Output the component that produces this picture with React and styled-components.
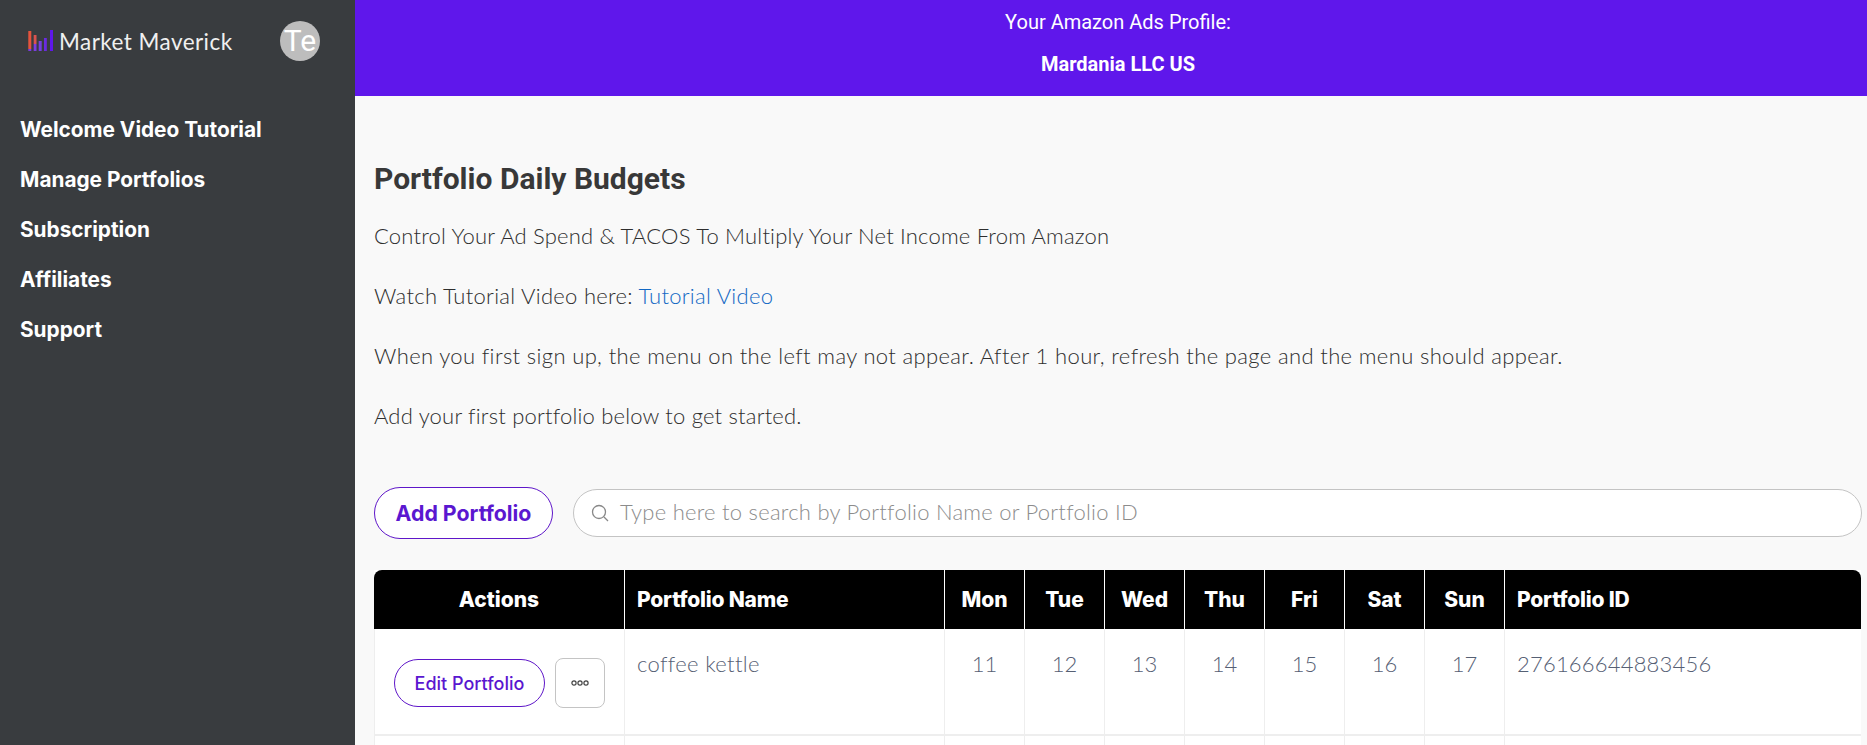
import React from "react";
import styled, { createGlobalStyle } from "styled-components";

const Global = createGlobalStyle`
  html, body { margin: 0; padding: 0; height: 745px; overflow: hidden; background: #f9f9f9; }
  * { box-sizing: border-box; }
`;
const Page = styled.div`display: flex; width: 1867px; height: 745px; overflow: hidden; font-family: Inter, "Noto Sans", sans-serif;`;
const Sidebar = styled.aside`width: 355px; flex: none; background: #393c3f; color: #fff;`;
const Brand = styled.div`display: flex; align-items: center; height: 82px; padding: 0 35px 0 28px; justify-content: space-between;`;
const Logo = styled.div`display: flex; align-items: center; gap: 5px;`;
const LogoText = styled.span`font-family: Lato, sans-serif; font-size: 22.5px; letter-spacing: .45px; color: #f0f0f0;`;
const Avatar = styled.div`width: 40px; height: 40px; border-radius: 50%; background: #bdbdbd; font: 30px/40px Roboto, sans-serif; text-align: center; color: #fff;`;
const Nav = styled.nav`display: flex; flex-direction: column; gap: 25px; padding: 35px 20px 0;`;
const NavItem = styled.a`font-weight: 700; font-size: 20.8px; line-height: 25px; color: #fff;`;
const Main = styled.main`flex: 1; min-width: 0;`;
const Banner = styled.header`height: 96px; background: #5f17eb; color: #fff; font-family: Roboto, sans-serif; text-align: center; font-size: 20px; padding: 10px 0 0 14px; display: flex; flex-direction: column; gap: 18px; line-height: 24px;`;
const Strong = styled.strong`font-weight: 700;`;
const Content = styled.div`padding: 65px 0 0 19px; color: #2e2e2e;`;
const Title = styled.h1`margin: 0; font: 700 30px/36px Roboto, sans-serif; color: #383838;`;
const Para = styled.p`margin: 0; font-family: Lato, sans-serif; font-size: 22px; font-weight: 300; line-height: 30px; margin-top: ${p => p.$top}px; letter-spacing: ${p => p.$track}px;`;
const Link = styled.a`color: #1268c4;`;
const Tools = styled.div`display: flex; align-items: center; gap: 20px; margin-top: 56px;`;
const AddButton = styled.button`width: 179px; height: 52px; background: #fff; border: 1px solid #5f17c9; border-radius: 26px; color: #5a17d0; font: 700 21.3px Inter, sans-serif; padding: 0;`;
const Search = styled.div`width: 1289px; height: 48px; flex: none; display: flex; align-items: center; gap: 11px; padding-left: 17px; background: #fff; border: 1px solid #c4c4c4; border-radius: 24px;`;
const Placeholder = styled.span`color: #8c8c8c; font-family: Lato, sans-serif; font-size: 22px; line-height: 26px; margin-top: -2px; font-weight: 300; letter-spacing: .25px;`;
const Table = styled.div`margin-top: 31px; width: 1487px; background: #fff;`;
const Row = styled.div`display: grid; grid-template-columns: 250px 320px repeat(7, 80px) 1fr; height: ${p => p.$h}px;`;
const Head = styled(Row)`background: #000; border-radius: 8px 8px 0 0;`;
const HCell = styled.div`display: flex; align-items: center; justify-content: ${p => p.$left ? "flex-start" : "center"}; padding: ${p => p.$left ? "0 12px" : "0"}; color: #fff; font-weight: 800; font-size: 21px; letter-spacing: ${p => p.$left ? "-.2px" : "0"}; border-left: ${p => p.$first ? "0" : "1px solid #fff"};`;
const Cell = styled.div`padding: ${p => p.$left ? "20px 12px" : "20px 0"}; color: #566074; font-family: Lato, sans-serif; font-size: 22px; font-weight: 300; line-height: 30px; letter-spacing: ${p => p.$track || 0}px; text-align: ${p => p.$left ? "left" : "center"}; border-left: 1px solid #eee; border-bottom: 2px solid #eee;`;
const ActionCell = styled.div`display: flex; align-items: center; gap: 10px; padding: 3px 0 0 19px; border-left: 1px solid #eee; border-bottom: 2px solid #eee;`;
const EditButton = styled.button`width: 151px; height: 48px; background: #fff; border: 1px solid #5f17c9; border-radius: 24px; color: #5a17d0; font: 500 18px Inter, sans-serif; padding: 0;`;
const MoreButton = styled.button`width: 50px; height: 50px; background: #fff; border: 1px solid #c4c4c4; border-radius: 8px; padding: 0; display: flex; align-items: center; justify-content: center;`;
const EmptyCell = styled.div`border-left: 1px solid #eee;`;

const days = ["Mon", "Tue", "Wed", "Thu", "Fri", "Sat", "Sun"];
const values = [11, 12, 13, 14, 15, 16, 17];

export default function App() {
  return (
    <Page>
      <Global />
      <Sidebar>
        <Brand>
          <Logo>
            <svg width="26" height="22" viewBox="0 0 26 22">
              <rect x="0.3" y="1" width="3" height="18" fill="#e5533d" />
              <rect x="0.3" y="19" width="3" height="2" fill="#7b3ce0" />
              <rect x="5.7" y="5" width="2.8" height="9" fill="#d9534f" />
              <rect x="5.7" y="14" width="2.8" height="7" fill="#7b3ce0" />
              <rect x="10.7" y="11" width="3" height="10" fill="#7440e0" />
              <rect x="16" y="8" width="2.8" height="13" fill="#6a2be0" />
              <rect x="22" y="0" width="3" height="21" fill="#5f17eb" />
            </svg>
            <LogoText>Market Maverick</LogoText>
          </Logo>
          <Avatar>Te</Avatar>
        </Brand>
        <Nav>
          {["Welcome Video Tutorial", "Manage Portfolios", "Subscription", "Affiliates", "Support"].map(t => <NavItem key={t}>{t}</NavItem>)}
        </Nav>
      </Sidebar>
      <Main>
        <Banner>
          <span>Your Amazon Ads Profile:</span>
          <Strong>Mardania LLC US</Strong>
        </Banner>
        <Content>
          <Title>Portfolio Daily Budgets</Title>
          <Para $top={24} $track={0.2}>Control Your Ad Spend &amp; TACOS To Multiply Your Net Income From Amazon</Para>
          <Para $top={30} $track={0.3}>Watch Tutorial Video here: <Link>Tutorial Video</Link></Para>
          <Para $top={30} $track={0.36}>When you first sign up, the menu on the left may not appear. After 1 hour, refresh the page and the menu should appear.</Para>
          <Para $top={30} $track={0.2}>Add your first portfolio below to get started.</Para>
          <Tools>
            <AddButton>Add Portfolio</AddButton>
            <Search>
              <svg width="18" height="18" viewBox="0 0 18 18" fill="none" stroke="#888" strokeWidth="1.3"><circle cx="8" cy="8" r="6.5" /><path d="M13 13l4 4" /></svg>
              <Placeholder>Type here to search by Portfolio Name or Portfolio ID</Placeholder>
            </Search>
          </Tools>
          <Table>
            <Head $h={59}>
              <HCell $first>Actions</HCell>
              <HCell $left>Portfolio Name</HCell>
              {days.map(d => <HCell key={d}>{d}</HCell>)}
              <HCell $left>Portfolio ID</HCell>
            </Head>
            <Row $h={107}>
              <ActionCell>
                <EditButton>Edit Portfolio</EditButton>
                <MoreButton>
                  <svg width="18" height="6" viewBox="0 0 18 6" fill="none" stroke="#444" strokeWidth="1.2"><circle cx="3" cy="3" r="2.1" /><circle cx="9" cy="3" r="2.1" /><circle cx="15" cy="3" r="2.1" /></svg>
                </MoreButton>
              </ActionCell>
              <Cell $left $track={0.35}>coffee kettle</Cell>
              {values.map(v => <Cell key={v}>{v}</Cell>)}
              <Cell $left $track={0.2}>276166644883456</Cell>
            </Row>
            <Row $h={20}>
              <EmptyCell /><EmptyCell />
              {values.map(v => <EmptyCell key={v} />)}
              <EmptyCell />
            </Row>
          </Table>
        </Content>
      </Main>
    </Page>
  );
}
